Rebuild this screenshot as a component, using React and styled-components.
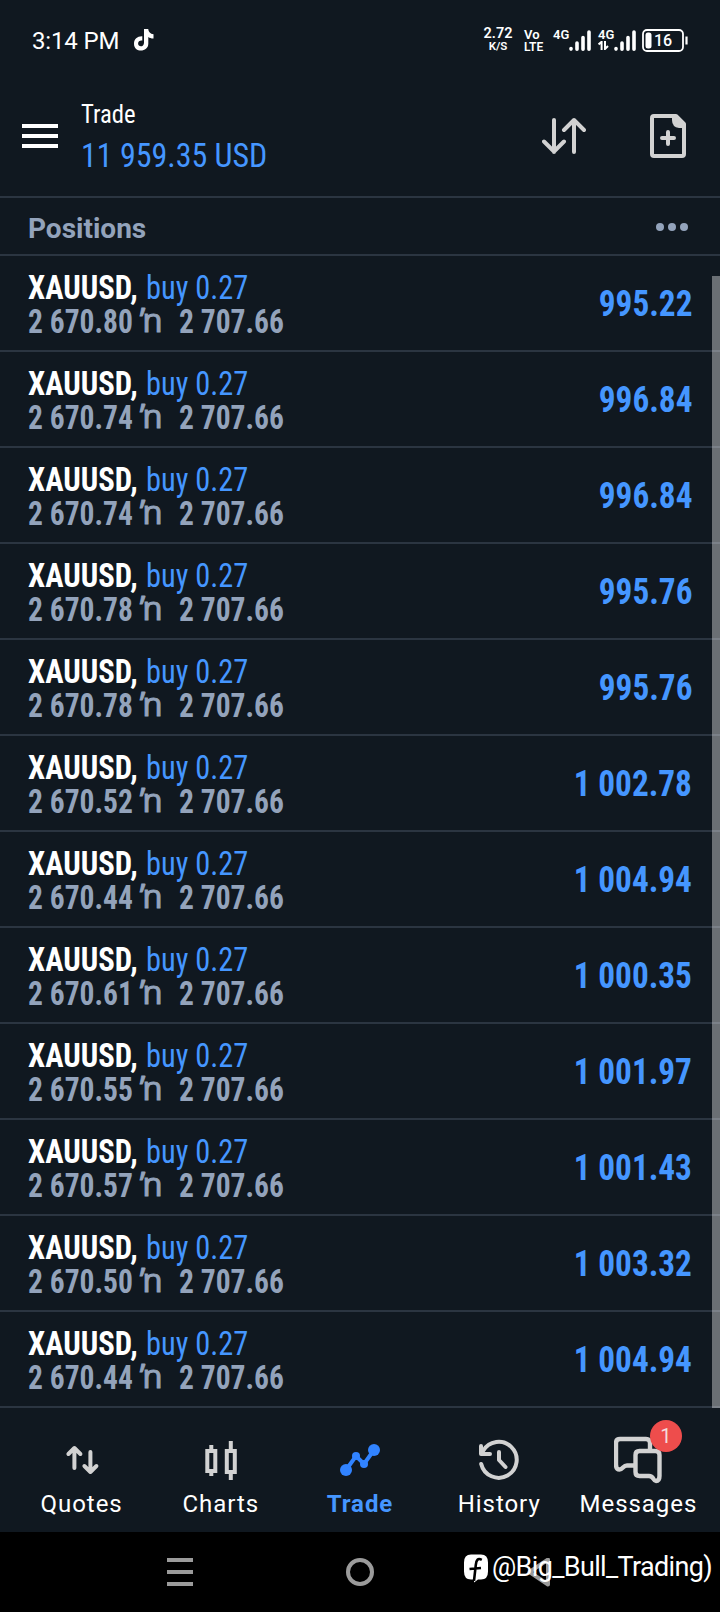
import React from "react";
import styled, { createGlobalStyle } from "styled-components";

const Global = createGlobalStyle`
  * { box-sizing: border-box; }
  body { margin: 0; background: #000; font-family: Roboto, "Liberation Sans", sans-serif; }
  svg { display: block; flex: none; }
`;

const Screen = styled.div`
  width: 720px;
  height: 1612px;
  display: flex;
  flex-direction: column;
  background: #101820;
  color: #fff;
  overflow: hidden;
`;

/* Condensed lettering in a fixed-width box, anchored to either side. */
const CondensedBox = styled.span`
  display: flex;
  flex: none;
  width: ${(p) => p.$width}px;
  justify-content: ${(p) => (p.$end ? "flex-end" : "flex-start")};
`;
const CondensedText = styled.span`
  flex: none;
  white-space: pre;
  font-stretch: 75%;
  font-size: ${(p) => p.$size}px;
  line-height: ${(p) => p.$line || p.$size}px;
  font-weight: ${(p) => p.$weight || 400};
  color: ${(p) => p.$color || "#fff"};
  transform: scaleX(${(p) => p.$scale || 0.95});
  transform-origin: ${(p) => (p.$end ? "right" : "left")} center;
`;
const Condensed = ({ width, end, size, line, weight, color, scale, children }) => (
  <CondensedBox $width={width} $end={end}>
    <CondensedText $end={end} $size={size} $line={line} $weight={weight} $color={color} $scale={scale}>
      {children}
    </CondensedText>
  </CondensedBox>
);

const StatusBar = styled.div`
  height: 80px;
  padding: 2px 32px 0;
  display: flex;
  align-items: center;
  justify-content: space-between;
`;
const Clock = styled.div`
  display: flex;
  align-items: center;
  gap: 15px;
  font-size: 24px;
  line-height: 28px;
  letter-spacing: -0.15px;
  svg { margin-top: -2px; }
`;
const StatusIcons = styled.div`
  display: flex;
  align-items: center;
  height: 26px;
`;
const Stack = styled.div`
  display: flex;
  flex: none;
  flex-direction: column;
  align-items: ${(p) => p.$align || "center"};
  width: ${(p) => p.$width}px;
  height: 26px;
  margin: ${(p) => p.$lift ? -3 : 0}px ${(p) => p.$gap || 0}px 0 ${(p) => p.$before || 0}px;
  font-weight: 600;
`;
const Tiny = styled.span`
  font-size: ${(p) => p.$size}px;
  line-height: ${(p) => p.$line || 13}px;
  white-space: nowrap;
`;

const Header = styled.header`
  height: 118px;
  padding: 17px 34px 0 22px;
  border-bottom: 2px solid #2b3541;
  display: flex;
`;
const MenuButton = styled.div`
  width: 36px;
  padding-top: 27px;
  margin-right: 23px;
  display: flex;
  flex-direction: column;
  gap: 6px;
`;
const Bar = styled.span`
  height: 4px;
  background: #fff;
`;
const Titles = styled.div`
  flex: 1;
  display: flex;
  flex-direction: column;
`;
const Actions = styled.div`
  display: flex;
  gap: 64px;
  padding-top: 17px;
`;

const SectionBar = styled.div`
  height: 58px;
  padding: 6px 32px 0 28px;
  border-bottom: 2px solid #2b3541;
  display: flex;
  align-items: center;
  justify-content: space-between;
  color: #93a3bb;
`;
const SectionTitle = styled.h2`
  margin: 0;
  font-size: 28px;
  line-height: 32px;
  font-weight: 680;
`;
const Dots = styled.div`
  display: flex;
  gap: 4px;
  margin-top: -4px;
`;
const Dot = styled.i`
  width: 8px;
  height: 8px;
  border-radius: 50%;
  background: #93a3bb;
`;

const List = styled.div`
  position: relative;
  height: 1152px;
`;
const Row = styled.div`
  height: 96px;
  padding: 15px 28px 0;
  border-bottom: 2px solid #2b3541;
  display: flex;
  justify-content: space-between;
`;
const Details = styled.div`
  display: flex;
  flex-direction: column;
`;
const Line = styled.div`
  display: flex;
  height: 34px;
`;
const Scroll = styled.div`
  position: absolute;
  right: 0;
  top: 20px;
  bottom: 0;
  width: 8px;
  background: rgba(255, 255, 255, 0.38);
`;
const Joiner = styled.span`
  width: 39px;
  font-family: "Noto Sans", sans-serif;
  font-size: 33px;
  line-height: 30px;
  color: #93a3bb;
  -webkit-text-stroke: 0.9px #93a3bb;
`;
const Profit = styled.div`
  padding-top: 12px;
`;

const Tabs = styled.nav`
  height: 124px;
  padding: 0 12px;
  display: flex;
`;
const Tab = styled.div`
  position: relative;
  flex: 1;
  display: flex;
  flex-direction: column;
  align-items: center;
  padding-top: 28px;
  font-size: 24px;
  line-height: 28px;
  letter-spacing: 0.95px;
  font-weight: ${(p) => (p.$active ? 700 : 400)};
  color: ${(p) => (p.$active ? "#4596ff" : "#fff")};
  svg { margin-bottom: 6px; }
`;
const Badge = styled.span`
  position: absolute;
  left: 81px;
  top: 12px;
  width: 32px;
  height: 32px;
  border-radius: 50%;
  background: #ee4d4c;
  color: #f3dcdc;
  font-size: 20px;
  line-height: 32px;
  letter-spacing: 0;
  text-align: center;
`;

const SystemNav = styled.div`
  position: relative;
  height: 80px;
  background: #000;
  display: flex;
  padding: 26px 0 0 166px;
`;
const SystemIcon = styled.div`
  width: ${(p) => p.$width}px;
`;
const Watermark = styled.div`
  position: absolute;
  left: 463px;
  top: 18px;
  display: flex;
  align-items: flex-start;
  gap: 3px;
  svg { margin-top: 4px; }
`;
const Handle = styled.span`
  font-size: 27px;
  line-height: 34px;
  letter-spacing: -0.65px;
  white-space: nowrap;
`;

const G = "#d2d2d2";

const TikTok = () => (
  <svg width="20" height="22" viewBox="0 0 20 22" fill="#fff">
    <path d="M10 0h4.200c.3 2.900 2 5 5.300 5.300v4.200c-2 .1-3.700-.5-5.200-1.500v6.800c0 8.600-14.300 9.400-14.300-.1 0-4.700 3.700-7.700 8.300-7.400v4.300c-2.400-.4-4.200.8-4.200 3 0 3.800 5.900 3.800 5.900-.9z" />
  </svg>
);
const Signal = () => (
  <svg width="22" height="22" viewBox="0 0 22 22" stroke="#fff" strokeWidth="3.600" strokeLinecap="round">
    <path d="M2 18.500v.6M8 13v6.200M14 7.500v11.700M20 2v17.200" />
  </svg>
);
const DataArrows = () => (
  <svg width="12" height="9" viewBox="0 0 12 9" fill="none" stroke="#fff" strokeWidth="2">
    <path d="M.6 3.400L3.600.8V9M7 0v8L10 5" />
  </svg>
);
const Battery = () => (
  <svg width="46" height="24" viewBox="0 0 46 24">
    <rect x="1" y="1" width="40" height="21" rx="4" fill="none" stroke="#fff" strokeWidth="1.800" />
    <rect x="3.500" y="3.500" width="6" height="16" rx="2.500" fill="#fff" />
    <path d="M44.500 7.500v8" stroke="#fff" strokeWidth="2.200" />
    <text x="12" y="17" fontSize="16" fontWeight="500" fill="#fff">16</text>
  </svg>
);
const SortIcon = () => (
  <svg width="44" height="44" viewBox="0 0 44 44" fill="none" stroke={G} strokeWidth="4" strokeLinecap="round" strokeLinejoin="round">
    <path d="M12 6v32M2 27.500l10 10 10-10M32 38V6M22 16L32 6l10 10" />
  </svg>
);
const NewOrderIcon = () => (
  <svg width="36" height="44" viewBox="0 0 36 44">
    <path d="M4 2h22l8 8v30q0 2-2 2H4q-2 0-2-2V4q0-2 2-2z" fill="none" stroke={G} strokeWidth="4" strokeLinejoin="round" />
    <path d="M22 2h4l8 8v4h-5q-7-1-7-8z" fill={G} />
    <path d="M12 24h12M18 18v12" stroke={G} strokeWidth="4" strokeLinecap="round" />
  </svg>
);
const QuotesIcon = () => (
  <svg width="48" height="48" viewBox="0 0 48 48" fill="none" stroke={G} strokeWidth="4" strokeLinecap="round" strokeLinejoin="round">
    <path d="M16.400 32V12M10.400 18l6-6 6 6M32.400 16v20M26.400 30l6 6 6-6" />
  </svg>
);
const ChartsIcon = () => (
  <svg width="48" height="48" viewBox="0 0 48 48" fill="none" stroke={G} strokeWidth="4">
    <path d="M10.300 15h8v20h-8zM29.800 15h8v21h-8zM14.300 9v5M14.300 36v4M33.800 5v9M33.800 38v6" />
  </svg>
);
const TradeIcon = () => (
  <svg width="48" height="48" viewBox="0 0 48 48" fill="#3183ff">
    <path d="M10 34L20 20l8 8 10-14" fill="none" stroke="#3183ff" strokeWidth="4" />
    <circle cx="10" cy="34" r="6" /><circle cx="20" cy="20" r="4" /><circle cx="28" cy="28" r="4" /><circle cx="38" cy="14" r="6" />
  </svg>
);
const HistoryIcon = () => (
  <svg width="48" height="48" viewBox="0 0 48 48" fill="none" stroke={G} strokeWidth="4" strokeLinecap="round" strokeLinejoin="round">
    <path d="M6.200 28A18 18 0 1 0 8 15M6 10v8h9M24 16v8l6.500 7" />
  </svg>
);
const MessagesIcon = () => (
  <svg width="48" height="48" viewBox="0 0 48 48" fill="none" stroke={G} strokeWidth="4.400" strokeLinejoin="round" strokeLinecap="round">
    <path d="M20 29.500h-7c-4 0-4 4-7.500 4q-3.500 0-3.500-5V7q0-4 4-4h26q4 0 4 4v7" />
    <path d="M25.500 15h16q4 0 4 4v21q0 5-3.500 5c-3 0-2-5-7-5h-9.500q-4 0-4-4V19q0-4 4-4z" />
  </svg>
);
const RecentsIcon = () => (
  <svg width="28" height="28" viewBox="0 0 28 28" stroke="#9b9b9b" strokeWidth="4">
    <path d="M1 2h26M1 14h26M1 26h26" />
  </svg>
);
const HomeIcon = () => (
  <svg width="28" height="28" viewBox="0 0 28 28" fill="none" stroke="#9b9b9b" strokeWidth="4">
    <circle cx="14" cy="14" r="12" />
  </svg>
);
const BackIcon = () => (
  <svg width="24" height="30" viewBox="0 0 24 30" fill="none" stroke="#9b9b9b" strokeWidth="4" strokeLinejoin="round">
    <path d="M22 1.500v25L3.500 14z" />
  </svg>
);
const FacebookIcon = () => (
  <svg width="26" height="29" viewBox="0 0 26 29">
    <path d="M8 .5h10q7 0 7 8v9q0 8-7 8h-3l-4 3v-3H8q-7 0-7-8v-9Q1 .5 8 .5z" fill="#fff" />
    <path d="M18.800 5.800c-4-2-5.500 0-6 5l-1.800 16M6.500 15l11.500-1" fill="none" stroke="#000" strokeWidth="2.600" />
  </svg>
);

const positions = [
  ["2 670.80", "995.22"],
  ["2 670.74", "996.84"],
  ["2 670.74", "996.84"],
  ["2 670.78", "995.76"],
  ["2 670.78", "995.76"],
  ["2 670.52", "1 002.78"],
  ["2 670.44", "1 004.94"],
  ["2 670.61", "1 000.35"],
  ["2 670.55", "1 001.97"],
  ["2 670.57", "1 001.43"],
  ["2 670.50", "1 003.32"],
  ["2 670.44", "1 004.94"],
];

const Position = ({ open, profit }) => (
  <Row>
    <Details>
      <Line>
        <Condensed width={118} size={33} line={34} weight={700} scale={0.93}>XAUUSD,</Condensed>
        <Condensed width={110} size={33} line={34} color="#4596ff" scale={0.92}>buy 0.27</Condensed>
      </Line>
      <Line>
        <Condensed width={112} size={33} line={34} weight={700} color="#93a3bb" scale={0.895}>{open}</Condensed>
        <Joiner>ŉ</Joiner>
        <Condensed width={110} size={33} line={34} weight={700} color="#93a3bb" scale={0.895}>2 707.66</Condensed>
      </Line>
    </Details>
    <Profit>
      <Condensed end width={140} size={36} line={42} weight={700} color="#4596ff" scale={0.923}>{profit}</Condensed>
    </Profit>
  </Row>
);

export default function App() {
  return (
    <Screen>
      <Global />
      <StatusBar>
        <Clock>3:14 PM<TikTok /></Clock>
        <StatusIcons>
          <Stack $width={28} $gap={12} $lift><Tiny $size={14.5}>2.72</Tiny><Tiny $size={11.5} $line={12}>K/S</Tiny></Stack>
          <Stack $width={20} $gap={9} $align="flex-start"><Tiny $size={13}>Vo</Tiny><Tiny $size={12}>LTE</Tiny></Stack>
          <Stack $width={16} $align="flex-start"><Tiny $size={13}>4G</Tiny></Stack>
          <Signal />
          <Stack $width={16} $before={7} $align="flex-start"><Tiny $size={13}>4G</Tiny><DataArrows /></Stack>
          <Signal />
          <Stack $width={6} />
          <Battery />
        </StatusIcons>
      </StatusBar>
      <Header>
        <MenuButton><Bar /><Bar /><Bar /></MenuButton>
        <Titles>
          <Condensed width={200} size={26} line={34}>Trade</Condensed>
          <Condensed width={300} size={34} line={48} color="#4596ff" scale={0.94}>11 959.35 USD</Condensed>
        </Titles>
        <Actions><SortIcon /><NewOrderIcon /></Actions>
      </Header>
      <SectionBar>
        <SectionTitle>Positions</SectionTitle>
        <Dots><Dot /><Dot /><Dot /></Dots>
      </SectionBar>
      <List>
        {positions.map(([open, profit], i) => <Position key={i} open={open} profit={profit} />)}
        <Scroll />
      </List>
      <Tabs>
        <Tab><QuotesIcon />Quotes</Tab>
        <Tab><ChartsIcon />Charts</Tab>
        <Tab $active><TradeIcon />Trade</Tab>
        <Tab><HistoryIcon />History</Tab>
        <Tab><MessagesIcon />Messages<Badge>1</Badge></Tab>
      </Tabs>
      <SystemNav>
        <SystemIcon $width={180}><RecentsIcon /></SystemIcon>
        <SystemIcon $width={180}><HomeIcon /></SystemIcon>
        <SystemIcon $width={28}><BackIcon /></SystemIcon>
        <Watermark>
          <FacebookIcon />
          <Handle>@Big_Bull_Trading)</Handle>
        </Watermark>
      </SystemNav>
    </Screen>
  );
}
